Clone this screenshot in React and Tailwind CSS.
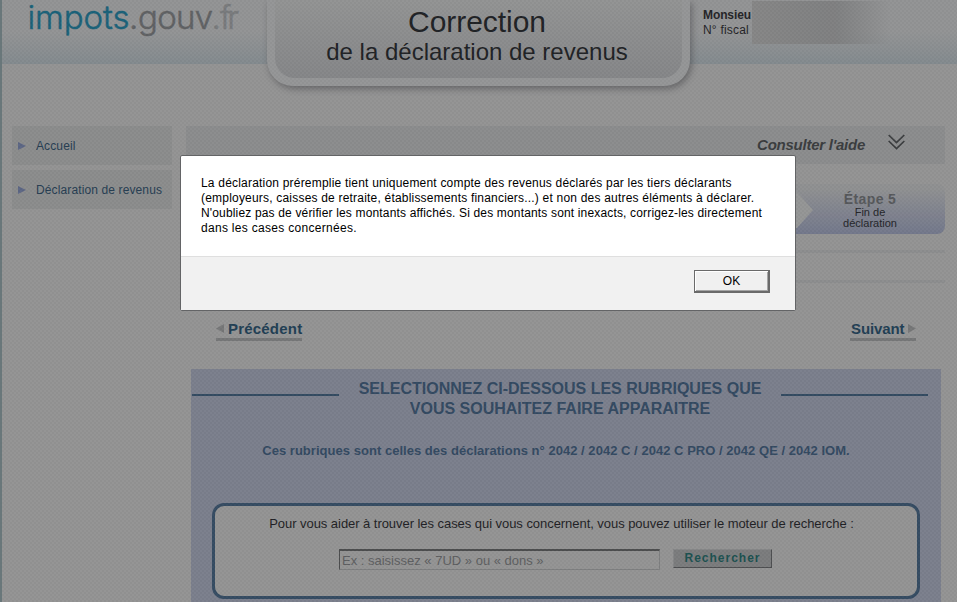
function Logo() {
  return (
    <svg className="h-[40px] w-[246px] shrink-0 overflow-visible font-['Inter',sans-serif] text-[33px] font-light" viewBox="0 0 246 40" strokeWidth="0.5">
      <text x="25.5" y="28.5" textLength="102" fill="#1a6178" stroke="#1a6178">impots</text>
      <text x="127" y="28.5" fill="#5f6163" stroke="#5f6163">.</text>
      <text x="136" y="28.5" textLength="75" fill="#5f6163" stroke="#5f6163">gouv</text>
      <text x="209.5" y="28.5" fill="#77797b" stroke="#77797b">.</text>
      <text x="218" y="28.5" textLength="19" fill="#77797b" stroke="#77797b">fr</text>
    </svg>
  );
}

function Header() {
  return (
    <header className="relative z-10 flex h-16 shrink-0 items-start bg-linear-to-b from-[#929394] from-50% to-[#838a8e]">
      <Logo />
      <div className="ml-[19px] h-[86px] w-[423px] shrink-0 rounded-b-[26px] bg-[#949596] px-2 pb-2 shadow-[2px_3px_6px_rgba(50,52,55,0.45)]">
        <div className="h-[78px] rounded-b-[20px] bg-linear-to-b from-[#929393] to-[#858688] pt-1 text-center text-[#1f2225]">
          <h1 className="h-[33px] whitespace-nowrap pr-[3px] text-[30px] leading-[35px] tracking-[-0.05px]">Correction</h1>
          <h2 className="whitespace-nowrap pr-[3px] text-[24px] leading-[29px]">de la déclaration de revenus</h2>
        </div>
      </div>
      <div className="ml-[13px] w-[49px] shrink-0 whitespace-nowrap pt-2 text-[12px] leading-[15px] text-[#242427]">
        <div className="font-bold tracking-[-0.1px]">Monsieu</div>
        <div className="tracking-[0.2px]">N° fiscal</div>
      </div>
      <div className="mt-px h-[43px] w-[138px] bg-linear-to-r from-[#868686] via-[#7f8081] via-60% to-transparent" />
    </header>
  );
}

function NavItem({ children }) {
  return (
    <div className="flex h-[39px] items-center bg-[#8b8c8c] pl-[6px] text-[12px] text-[#263d52]">
      <svg className="mr-[10px] h-[8px] w-[8px]" viewBox="0 0 8 8"><path d="M0 0L8 4L0 8Z" fill="#5c6684" /></svg>
      <span className="whitespace-nowrap tracking-[0.12px]">{children}</span>
    </div>
  );
}

function StepStrip() {
  return (
    <div className="mt-5 flex h-[50px] justify-end rounded-[8px] bg-linear-to-b from-[#8f9091] from-10% to-[#72778b]">
      <svg className="h-[50px] w-[30px]" viewBox="0 0 30 50"><path d="M0 8L10 8L26 26L10 44H0Z" fill="#949595" /></svg>
      <div className="w-[128px] pr-[22px] pt-[7px] text-center text-[11px] leading-[11px] text-[#242529]">
        <div className="text-[14px] font-bold leading-[16px] tracking-[0.4px] text-[#56585b]">Étape 5</div>
        <div>Fin de</div>
        <div>déclaration</div>
      </div>
    </div>
  );
}

function Pager() {
  return (
    <div className="mt-[37px] flex justify-between pl-[30px] pr-[29px] text-[15px] font-bold leading-[18px] text-[#213e54]">
      <a className="flex h-[21px] w-[86px] items-start border-b-[3px] border-[#757677]">
        <svg className="mr-[4px] mt-[4px] h-[9px] w-[8px] shrink-0" viewBox="0 0 8 9"><path d="M8 0V9L0 4.5Z" fill="#757677" /></svg>
        <span className="whitespace-nowrap tracking-[0.2px]">Précédent</span>
      </a>
      <a className="flex h-[21px] w-[66px] items-start justify-between border-b-[3px] border-[#757677]">
        <span className="whitespace-nowrap pl-px tracking-[-0.1px]">Suivant</span>
        <svg className="mt-[4px] h-[9px] w-[8px] shrink-0" viewBox="0 0 8 9"><path d="M0 0V9L8 4.5Z" fill="#757677" /></svg>
      </a>
    </div>
  );
}

function SearchBox() {
  return (
    <div className="ml-[21px] mt-[43px] h-[96px] w-[708px] rounded-[12px] border-[3px] border-[#354b62] bg-[#939393] pt-[10px]">
      <p className="whitespace-nowrap pr-[9px] text-center text-[13px] leading-[15px] tracking-[-0.05px] text-[#1f1f25]">
        Pour vous aider à trouver les cases qui vous concernent, vous pouvez utiliser le moteur de recherche :
      </p>
      <div className="mt-[18px] flex pl-[124px]">
        <div className="h-[21px] w-[321px] whitespace-nowrap border border-t-2 border-b-[#7c7d7e] border-l-[#4b4c4e] border-r-[#7c7d7e] border-t-[#4b4c4e] pl-[2px] text-[13px] leading-[19px] text-[#5d5e60]">
          Ex : saisissez « 7UD » ou « dons »
        </div>
        <button className="ml-[13px] h-[19px] w-[99px] border border-b-[#4c4e50] border-l-[#858687] border-r-[#4c4e50] border-t-[#858687] bg-[#7a7b7c] text-[12px] font-bold leading-[15px] tracking-[1px] text-[#1c5150]">
          Rechercher
        </button>
      </div>
    </div>
  );
}

function Rubrics() {
  return (
    <section className="ml-[5px] mt-[28px] h-[233px] w-[750px] overflow-hidden bg-[#7a7e8c] text-[#334961]">
      <div className="flex h-[55px] pl-px pt-[9px] font-bold">
        <div className="mt-4 h-[2px] w-[147px] bg-[#334a61]" />
        <div className="w-[442px] whitespace-nowrap pt-px text-center text-[16px] leading-[20px]">
          SELECTIONNEZ CI-DESSOUS LES RUBRIQUES QUE
          <br />
          VOUS SOUHAITEZ FAIRE APPARAITRE
        </div>
        <div className="mt-4 h-[2px] w-[147px] bg-[#334a61]" />
      </div>
      <p className="mt-[18px] whitespace-nowrap pr-[20px] text-center text-[13px] font-bold leading-[18px] tracking-[0.03px]">
        Ces rubriques sont celles des déclarations n° 2042 / 2042 C / 2042 C PRO / 2042 QE / 2042 IOM.
      </p>
      <SearchBox />
    </section>
  );
}

function Dialog() {
  return (
    <div className="absolute left-[178px] top-[155px] z-30 flex h-[156px] w-[616px] flex-col rounded-[2px] border border-[#636466] bg-white text-[12px] leading-[15px] text-black">
      <div className="h-[100px] shrink-0 whitespace-nowrap pl-5 pt-5">
        <p className="tracking-[0.2px]">La déclaration préremplie tient uniquement compte des revenus déclarés par les tiers déclarants</p>
        <p className="tracking-[0.2px]">(employeurs, caisses de retraite, établissements financiers...) et non des autres éléments à déclarer.</p>
        <p className="tracking-[0.16px]">N'oubliez pas de vérifier les montants affichés. Si des montants sont inexacts, corrigez-les directement</p>
        <p className="tracking-[0.3px]">dans les cases concernées.</p>
      </div>
      <div className="flex flex-1 justify-end border-t border-[#dfdfdf] bg-[#f1f1f1] pr-[25px] pt-[13px]">
        <button className="h-[23px] w-[76px] border border-b-2 border-r-2 border-[#6a6a6a] bg-[#f0f0f0] leading-[18px] shadow-[inset_1px_1px_0_#fff,inset_-1px_-1px_0_#a5a5a5]">OK</button>
      </div>
    </div>
  );
}

export default function App() {
  return (
    <div className="relative flex h-[602px] w-[957px] flex-col overflow-hidden border-l-2 border-[#69777a] bg-[#939393] font-['Liberation_Sans',Arial,sans-serif]">
      <Header />
      <div className="flex pl-[10px] pt-[62px]">
        <nav className="flex w-[160px] shrink-0 flex-col gap-[5px]">
          <NavItem>Accueil</NavItem>
          <NavItem>Déclaration de revenus</NavItem>
        </nav>
        <main className="ml-[14px] w-[759px] shrink-0">
          <div className="flex h-[38px] items-center justify-end bg-[#8b8c8d] pr-[40px] text-[#3a3c3e]">
            <span className="mb-[2px] mr-[23px] whitespace-nowrap text-[15px] font-bold italic leading-[17px] tracking-[-0.25px]">Consulter l'aide</span>
            <svg className="mb-[6px] h-[16px] w-[17px]" viewBox="0 0 17 16" fill="none" stroke="#3a3c3e" strokeWidth="1.7"><path d="M.7 1L8.5 8.5L16.3 1M.7 7L8.5 14.5L16.3 7" /></svg>
          </div>
          <StepStrip />
          <div className="mt-4 h-[33px] border-y-[3px] border-[#8c8d8e]" />
          <Pager />
          <Rubrics />
        </main>
      </div>
      <div className="pointer-events-none absolute inset-0 z-20 bg-[conic-gradient(rgba(0,0,0,0.02)_25%,rgba(255,255,255,0.02)_0_50%,rgba(0,0,0,0.02)_0_75%,rgba(255,255,255,0.02)_0)] bg-size-[4px_4px]" />
      <Dialog />
    </div>
  );
}
